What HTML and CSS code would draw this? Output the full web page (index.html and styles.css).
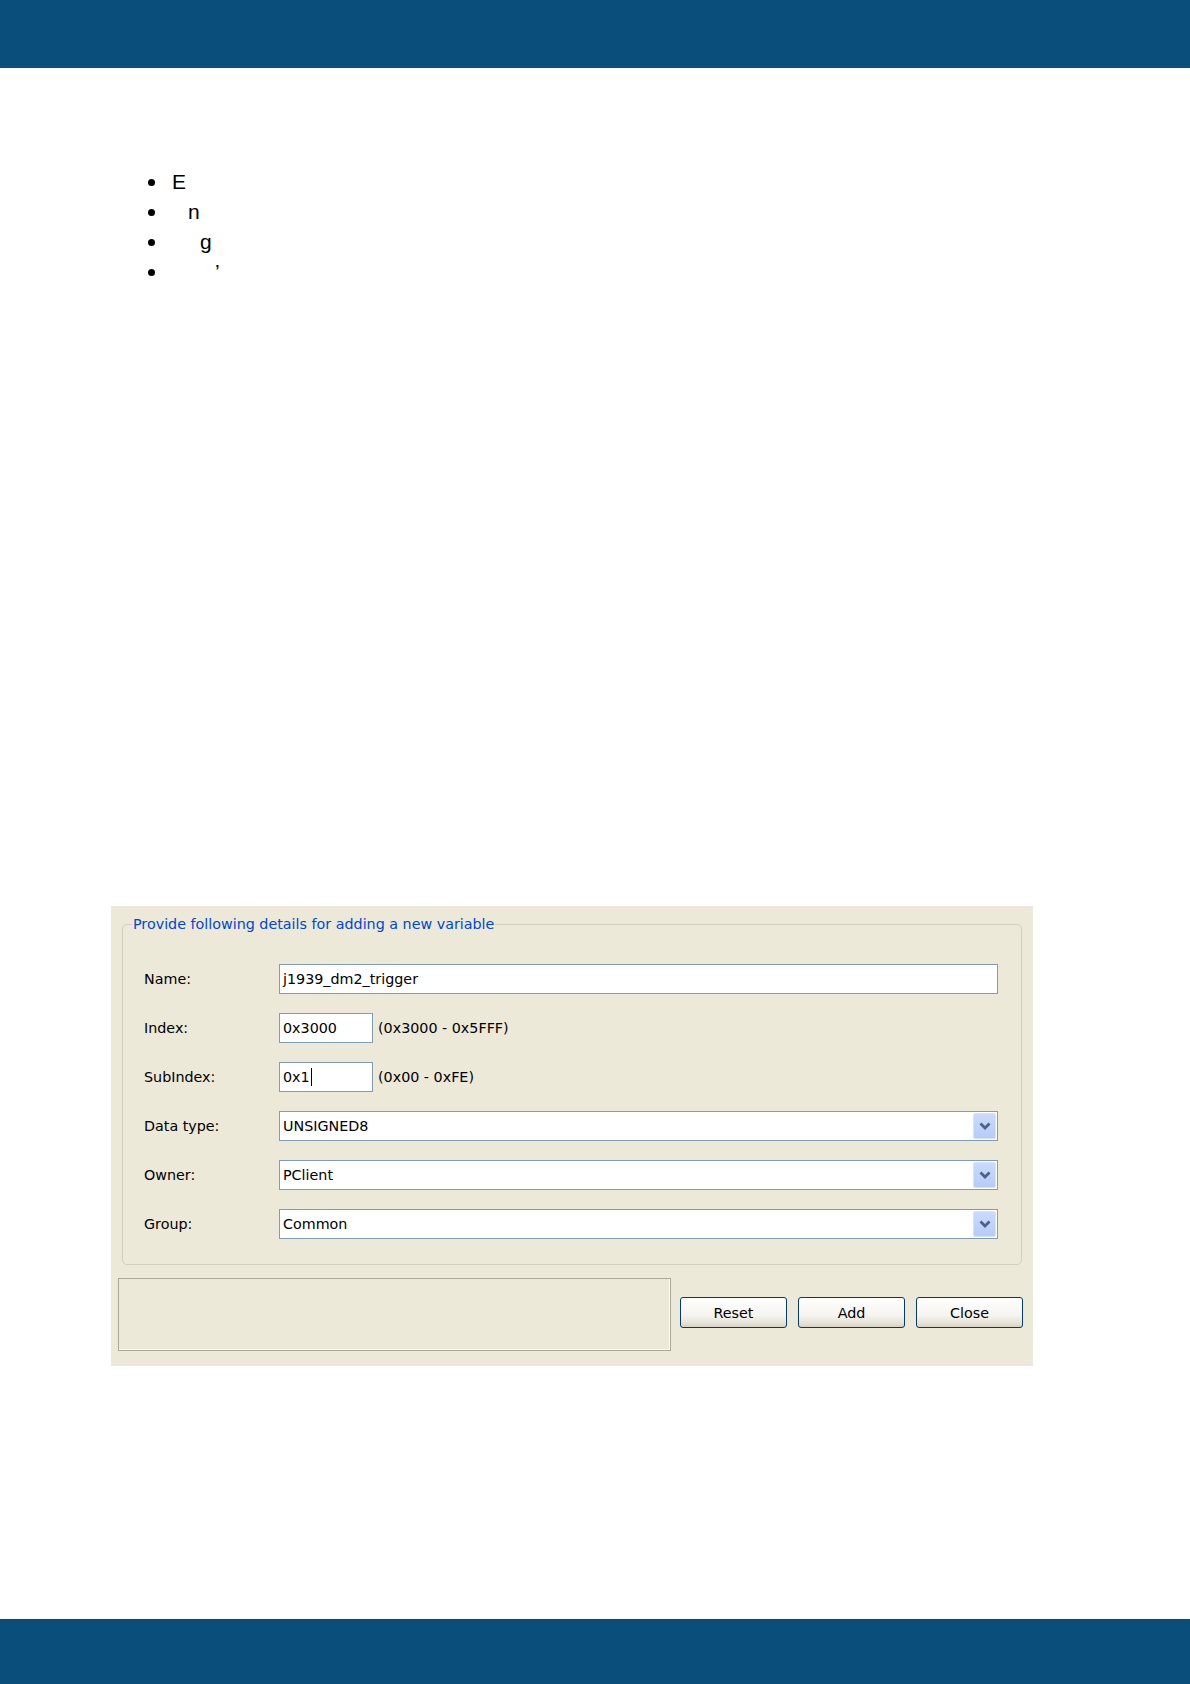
FILE: index.html
```html
<!DOCTYPE html>
<html lang="en">
<head>
<meta charset="utf-8">
<title>Add variable</title>
<link rel="stylesheet" href="styles.css">
</head>
<body>
<div class="page">
  <header class="topbar"></header>
  <main class="content">
    <ul class="bullets">
      <li><span class="t1">E</span></li>
      <li><span class="t2">n</span></li>
      <li><span class="t3">g</span></li>
      <li><span class="t4">’</span></li>
    </ul>

    <div class="dialog">
      <fieldset class="group">
        <legend>Provide following details for adding a new variable</legend>
        <div class="form">
          <label class="lbl">Name:</label>
          <div class="field"><div class="input">j1939_dm2_trigger</div></div>

          <label class="lbl">Index:</label>
          <div class="field"><div class="input small">0x3000</div><span class="hint">(0x3000 - 0x5FFF)</span></div>

          <label class="lbl">SubIndex:</label>
          <div class="field"><div class="input small">0x1<span class="caret"></span></div><span class="hint">(0x00 - 0xFE)</span></div>

          <label class="lbl">Data type:</label>
          <div class="field">
            <div class="combo"><span class="value">UNSIGNED8</span>
              <span class="drop"><svg viewBox="0 0 12 8" width="12" height="8"><polyline points="1.5,1.5 6,6 10.5,1.5" fill="none" stroke="#4d6185" stroke-width="2.8"/></svg></span>
            </div>
          </div>

          <label class="lbl">Owner:</label>
          <div class="field">
            <div class="combo"><span class="value">PClient</span>
              <span class="drop"><svg viewBox="0 0 12 8" width="12" height="8"><polyline points="1.5,1.5 6,6 10.5,1.5" fill="none" stroke="#4d6185" stroke-width="2.8"/></svg></span>
            </div>
          </div>

          <label class="lbl">Group:</label>
          <div class="field">
            <div class="combo"><span class="value">Common</span>
              <span class="drop"><svg viewBox="0 0 12 8" width="12" height="8"><polyline points="1.5,1.5 6,6 10.5,1.5" fill="none" stroke="#4d6185" stroke-width="2.8"/></svg></span>
            </div>
          </div>
        </div>
      </fieldset>

      <div class="actions">
        <div class="status"></div>
        <button class="btn">Reset</button>
        <button class="btn">Add</button>
        <button class="btn">Close</button>
      </div>
    </div>
  </main>
  <footer class="bottombar"></footer>
</div>
</body>
</html>
```

FILE: styles.css
```css
* { box-sizing: border-box; }

html, body {
  margin: 0;
  padding: 0;
  background: #ffffff;
}

.page {
  min-height: 1684px;
  display: flex;
  flex-direction: column;
}

.topbar {
  height: 68px;
  background: #0a4f7c;
  flex: none;
}

.bottombar {
  height: 65px;
  background: #0a4f7c;
  margin-top: auto;
  flex: none;
}

.content {
  display: flex;
  flex-direction: column;
}

/* bullet list */
.bullets {
  list-style: none;
  margin: 99px 0 0 0;
  padding: 0;
  font-family: "Liberation Sans", Arial, sans-serif;
  font-size: 21px;
  line-height: 30px;
  color: #000;
}

.bullets li {
  display: flex;
  align-items: center;
  height: 30px;
}

.bullets li::before {
  content: "";
  width: 7px;
  height: 7px;
  border-radius: 50%;
  background: #000;
  margin-left: 148px;
  margin-right: 17px;
  flex: none;
}

.t2 { padding-left: 16px; }
.t3 { padding-left: 28px; }
.t4 { padding-left: 43px; }

/* dialog */
.dialog {
  margin: 619px 0 0 111px;
  width: 922px;
  height: 460px;
  background: #ece9d8;
  padding-top: 9px;
  font-family: "DejaVu Sans", Verdana, sans-serif;
  font-size: 14.3px;
  color: #000;
}

.group {
  margin: 0 11px;
  border: 1px solid #d0d0bf;
  border-radius: 5px;
  padding: 31px 23px 25px 21px;
  min-width: 0;
}

.group legend {
  color: #0046d5;
  line-height: 18px;
  padding: 0 1px;
  margin-left: -12px;
}

.form {
  display: grid;
  grid-template-columns: 135px 1fr;
  row-gap: 19px;
  align-items: center;
}

.lbl {
  line-height: 30px;
}

.field {
  display: flex;
  align-items: center;
  height: 30px;
}

.input {
  flex: 1;
  height: 30px;
  border: 1px solid #7f9db9;
  background: #fff;
  padding-left: 3px;
  line-height: 28px;
  white-space: nowrap;
  display: flex;
  align-items: center;
}

.input.small {
  flex: none;
  width: 94px;
}

.caret {
  display: inline-block;
  width: 1px;
  height: 18px;
  background: #000;
  margin-left: 1px;
}

.hint {
  margin-left: 5px;
}

.combo {
  flex: 1;
  height: 30px;
  border: 1px solid #7f9db9;
  background: #fff;
  display: flex;
  align-items: stretch;
}

.combo .value {
  flex: 1;
  padding-left: 3px;
  line-height: 28px;
}

.drop {
  width: 23px;
  margin: 1px;
  background: linear-gradient(#cbdafd, #b7cbf9);
  border: 1px solid #d6e2fb;
  border-radius: 2px;
  display: flex;
  align-items: center;
  justify-content: center;
}

.actions {
  display: flex;
  align-items: center;
  margin-top: 13px;
  padding-left: 7px;
}

.status {
  width: 553px;
  height: 73px;
  border: 1px solid #aca899;
  box-shadow: inset -1px -1px 0 #ffffff;
  flex: none;
}

.btn {
  width: 107px;
  height: 31px;
  margin-left: 11px;
  margin-bottom: 4px;
  border: 1px solid #003c74;
  border-radius: 3px;
  background: linear-gradient(#ffffff, #f5f4ef 60%, #e3e0d5 90%, #d6d0c5);
  font-family: "DejaVu Sans", Verdana, sans-serif;
  font-size: 14.3px;
  color: #000;
  padding: 0;
  flex: none;
}

.status + .btn {
  margin-left: 9px;
}
```
